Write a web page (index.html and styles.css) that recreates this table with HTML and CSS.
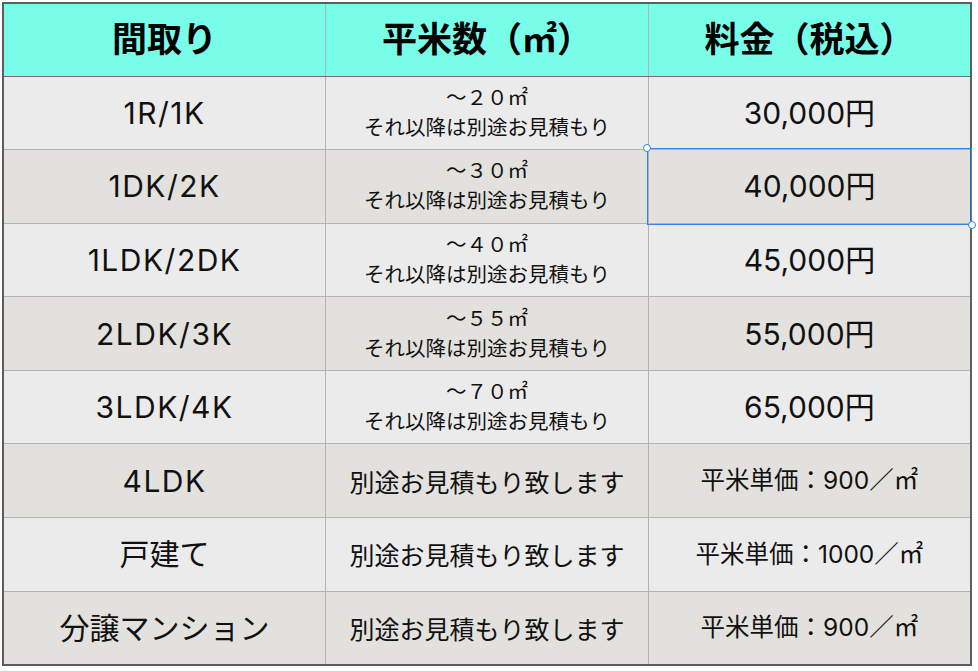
FILE: index.html
```html
<!DOCTYPE html>
<html lang="ja">
<head>
<meta charset="utf-8">
<title>料金表</title>
<link rel="stylesheet" href="styles.css">
</head>
<body>
<table class="price">
  <thead>
    <tr><th>間取り</th><th>平米数（㎡）</th><th>料金（税込）</th></tr>
  </thead>
  <tbody>
    <tr><td class="plan latin">1R/1K</td><td class="area"><span>～２０㎡</span><span>それ以降は別途お見積もり</span></td><td class="fee">30,000円</td></tr>
    <tr><td class="plan latin">1DK/2K</td><td class="area"><span>～３０㎡</span><span>それ以降は別途お見積もり</span></td><td class="fee selected">40,000円<span class="sel"><i class="h tl"></i><i class="h br"></i></span></td></tr>
    <tr><td class="plan latin">1LDK/2DK</td><td class="area"><span>～４０㎡</span><span>それ以降は別途お見積もり</span></td><td class="fee">45,000円</td></tr>
    <tr><td class="plan latin">2LDK/3K</td><td class="area"><span>～５５㎡</span><span>それ以降は別途お見積もり</span></td><td class="fee">55,000円</td></tr>
    <tr><td class="plan latin">3LDK/4K</td><td class="area"><span>～７０㎡</span><span>それ以降は別途お見積もり</span></td><td class="fee">65,000円</td></tr>
    <tr><td class="plan latin">4LDK</td><td class="note">別途お見積もり致します</td><td class="unit">平米単価：900／㎡</td></tr>
    <tr><td class="plan">戸建て</td><td class="note">別途お見積もり致します</td><td class="unit">平米単価：1000／㎡</td></tr>
    <tr><td class="plan">分譲マンション</td><td class="note">別途お見積もり致します</td><td class="unit">平米単価：900／㎡</td></tr>
  </tbody>
</table>
</body>
</html>
```
FILE: styles.css
```css
html, body {
  margin: 0;
  padding: 0;
  background: #ffffff;
}
body {
  padding: 2px 0 0 2px;
  font-family: "Noto Sans CJK JP", "Noto Sans", sans-serif;
  color: #111;
}
.price {
  border-collapse: collapse;
  width: 970px;
  table-layout: fixed;
  border: 2px solid #5e5e5e;
}
.price th,
.price td {
  box-sizing: border-box;
  height: 73.6px;
  padding: 0;
  text-align: center;
  vertical-align: middle;
  border: 1px solid #b3b3b3;
  line-height: 1.2;
}
.price th {
  background: #78fde9;
  font-size: 35px;
  font-weight: 700;
  color: #000;
  border-bottom: 1px solid #6f6f6f;
  height: 73px;
  padding-bottom: 6px;
}
.price tbody tr:nth-child(odd) td { background: #ebebeb; }
.price tbody tr:nth-child(even) td { background: #e2e1dd; }
.plan,
.fee {
  font-family: "Inter", "Noto Sans CJK JP", sans-serif;
  font-size: 30px;
  padding-bottom: 2px;
}
.latin {
  letter-spacing: 1.5px;
}
.area {
  font-size: 20.5px;
}
.area span {
  display: block;
  line-height: 30px;
}
.area span:last-child {
  margin-bottom: 4px;
}
.note {
  font-size: 25px;
  padding-bottom: 3px;
}
.unit {
  font-family: "Inter", "Noto Sans CJK JP", sans-serif;
  font-size: 24.5px;
  padding-bottom: 3px;
}
.selected {
  position: relative;
}
.sel {
  position: absolute;
  left: -2px;
  top: -2px;
  right: -2px;
  bottom: -2px;
  border: 1px solid #2b84f0;
}
.h {
  position: absolute;
  width: 6px;
  height: 6px;
  border: 1.5px solid #2b84f0;
  border-radius: 50%;
  background: #fff;
}
.tl { left: -5px; top: -5px; }
.br { right: -5px; bottom: -5px; }
```
